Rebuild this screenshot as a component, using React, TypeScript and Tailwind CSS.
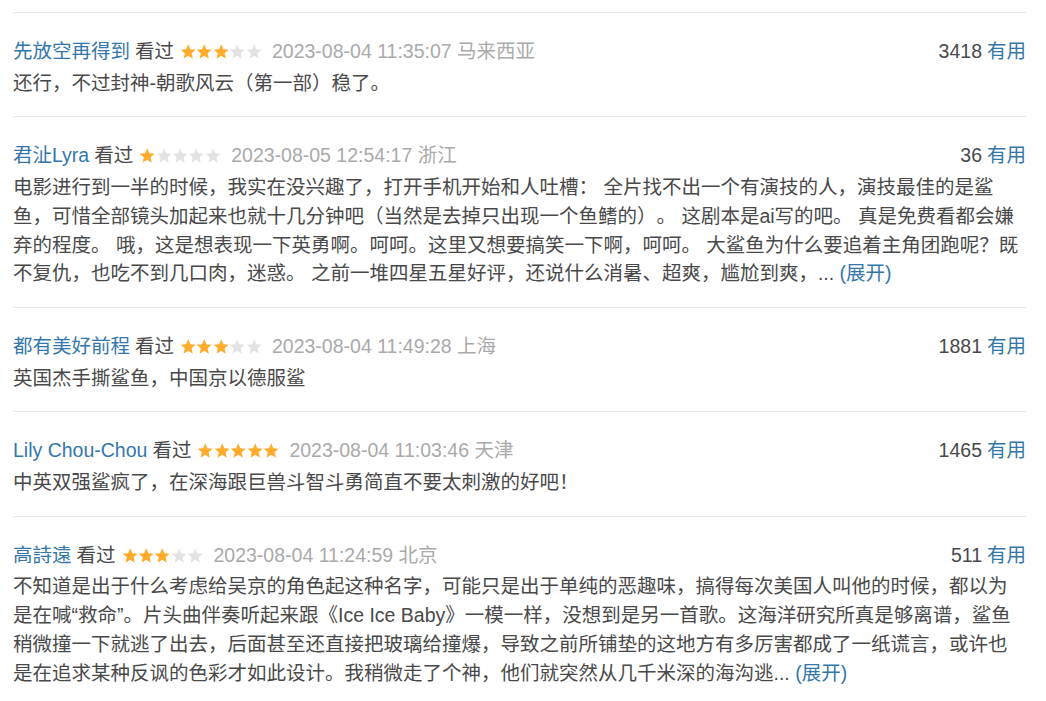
const REVIEWS = [
  {
    name: '先放空再得到',
    stars: 3,
    time: '2023-08-04 11:35:07',
    place: '马来西亚',
    votes: 3418,
    text: '还行，不过封神-朝歌风云（第一部）稳了。',
    more: false,
  },
  {
    name: '君沚Lyra',
    stars: 1,
    time: '2023-08-05 12:54:17',
    place: '浙江',
    votes: 36,
    text: '电影进行到一半的时候，我实在没兴趣了，打开手机开始和人吐槽： 全片找不出一个有演技的人，演技最佳的是鲨鱼，可惜全部镜头加起来也就十几分钟吧（当然是去掉只出现一个鱼鳍的）。 这剧本是ai写的吧。 真是免费看都会嫌弃的程度。 哦，这是想表现一下英勇啊。呵呵。这里又想要搞笑一下啊，呵呵。 大鲨鱼为什么要追着主角团跑呢？既不复仇，也吃不到几口肉，迷惑。 之前一堆四星五星好评，还说什么消暑、超爽，尴尬到爽，...',
    more: true,
  },
  {
    name: '都有美好前程',
    stars: 3,
    time: '2023-08-04 11:49:28',
    place: '上海',
    votes: 1881,
    text: '英国杰手撕鲨鱼，中国京以德服鲨',
    more: false,
  },
  {
    name: 'Lily Chou-Chou',
    stars: 5,
    time: '2023-08-04 11:03:46',
    place: '天津',
    votes: 1465,
    text: '中英双强鲨疯了，在深海跟巨兽斗智斗勇简直不要太刺激的好吧！',
    more: false,
  },
  {
    name: '高詩遠',
    stars: 3,
    time: '2023-08-04 11:24:59',
    place: '北京',
    votes: 511,
    text: '不知道是出于什么考虑给吴京的角色起这种名字，可能只是出于单纯的恶趣味，搞得每次美国人叫他的时候，都以为是在喊“救命”。片头曲伴奏听起来跟《Ice Ice Baby》一模一样，没想到是另一首歌。这海洋研究所真是够离谱，鲨鱼稍微撞一下就逃了出去，后面甚至还直接把玻璃给撞爆，导致之前所铺垫的这地方有多厉害都成了一纸谎言，或许也是在追求某种反讽的色彩才如此设计。我稍微走了个神，他们就突然从几千米深的海沟逃...',
    more: true,
  },
]

function Stars({ n }: { n: number }) {
  return (
    <span className="inline-flex items-center ml-[6px] mr-[10px]">
      {[0, 1, 2, 3, 4].map(i => (
        <svg key={i} className="w-[16.4px] h-[15px]" viewBox="0 0 24 22">
          <polygon
            points="12,0.5 15.1,7.8 23,8.5 17,13.7 18.8,21.5 12,17.4 5.2,21.5 7,13.7 1,8.5 8.9,7.8"
            fill={i < n ? '#ffac2d' : '#e3e3e3'}
          />
        </svg>
      ))}
    </span>
  )
}

export default function App() {
  return (
    <div
      className="bg-white min-h-[701px] pt-[12px] [text-spacing-trim:space-all]"
      style={{ fontFamily: '"Liberation Sans", Arial, "Noto Sans CJK SC", sans-serif' }}
    >
      <div className="ml-[13px] w-[1013px]">
        {REVIEWS.map(r => (
          <div key={r.name} className="border-t border-[#e8e8e8] pt-[24px] pb-[19px] text-[19.5px] leading-[28.7px] text-[#494949]">
            <div className="flex items-center justify-between mb-[3px]">
              <div className="flex items-center">
                <span className="text-[#3377aa]">{r.name}</span>
                <span className="ml-[5px]">看过</span>
                <Stars n={r.stars} />
                <span className="text-[#aaaaaa]">{r.time} {r.place}</span>
              </div>
              <div>
                <span>{r.votes}</span>
                <span className="text-[#3377aa] ml-[5px]">有用</span>
              </div>
            </div>
            <p>
              {r.text}
              {r.more && <span className="text-[#3377aa]"> (展开)</span>}
            </p>
          </div>
        ))}
      </div>
    </div>
  )
}
